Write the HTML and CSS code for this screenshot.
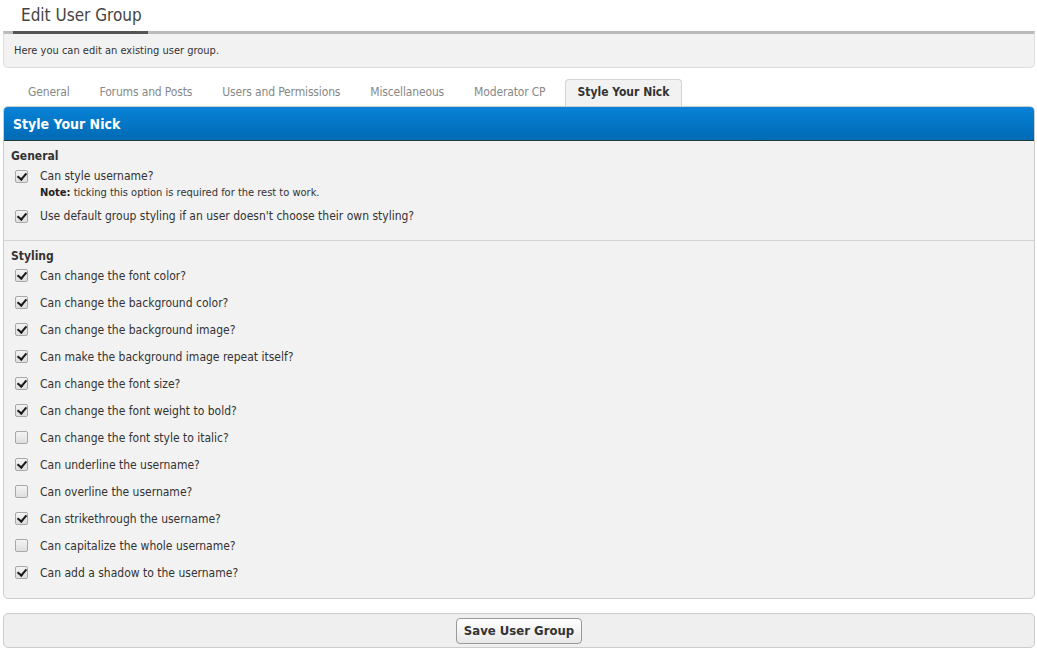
FILE: index.html
```html
<!DOCTYPE html>
<html>
<head>
<meta charset="utf-8">
<title>Edit User Group</title>
<link rel="stylesheet" href="styles.css">
</head>
<body>
<div class="page">
  <div class="title-row"><h1 class="title">Edit User Group</h1></div>
  <div class="desc">Here you can edit an existing user group.</div>

  <ul class="tabs">
    <li class="tab">General</li>
    <li class="tab">Forums and Posts</li>
    <li class="tab">Users and Permissions</li>
    <li class="tab">Miscellaneous</li>
    <li class="tab">Moderator CP</li>
    <li class="tab active">Style Your Nick</li>
  </ul>

  <div class="panel">
    <div class="panel-head">Style Your Nick</div>
    <div class="section general">
      <div class="sec-title">General</div>
      <div class="row"><span class="cb on"></span><span class="lbl">Can style username?</span></div>
      <div class="note"><b>Note:</b> ticking this option is required for the rest to work.</div>
      <div class="row row-gap"><span class="cb on"></span><span class="lbl">Use default group styling if an user doesn't choose their own styling?</span></div>
    </div>
    <div class="section styling">
      <div class="sec-title">Styling</div>
      <div class="row"><span class="cb on"></span><span class="lbl">Can change the font color?</span></div>
      <div class="row"><span class="cb on"></span><span class="lbl">Can change the background color?</span></div>
      <div class="row"><span class="cb on"></span><span class="lbl">Can change the background image?</span></div>
      <div class="row"><span class="cb on"></span><span class="lbl">Can make the background image repeat itself?</span></div>
      <div class="row"><span class="cb on"></span><span class="lbl">Can change the font size?</span></div>
      <div class="row"><span class="cb on"></span><span class="lbl">Can change the font weight to bold?</span></div>
      <div class="row"><span class="cb"></span><span class="lbl">Can change the font style to italic?</span></div>
      <div class="row"><span class="cb on"></span><span class="lbl">Can underline the username?</span></div>
      <div class="row"><span class="cb"></span><span class="lbl">Can overline the username?</span></div>
      <div class="row"><span class="cb on"></span><span class="lbl">Can strikethrough the username?</span></div>
      <div class="row"><span class="cb"></span><span class="lbl">Can capitalize the whole username?</span></div>
      <div class="row"><span class="cb on"></span><span class="lbl">Can add a shadow to the username?</span></div>
    </div>
  </div>

  <div class="footer"><button class="btn" type="button">Save User Group</button></div>
</div>
</body>
</html>
```

FILE: styles.css
```css
* { box-sizing: border-box; }
html, body { margin: 0; padding: 0; background: #fff; }
body {
  font-family: "DejaVu Sans Condensed", "DejaVu Sans", sans-serif;
  font-size: 12px;
  color: #333;
}
.page { padding: 0 2px 0 3px; }

.title-row { display: flex; padding-left: 10px; }
.title {
  margin: 0;
  font-size: 17px;
  font-weight: normal;
  color: #444;
  padding: 5px 7px 0 8px;
  height: 31px;
  line-height: 21px;
}

.desc {
  position: relative;
  height: 37px;
  background: #f2f2f2;
  border: 1px solid #ddd;
  border-top: 3px solid #bbb;
  border-radius: 0 0 5px 5px;
  padding: 10px 10px 0 10px;
  font-size: 11px;
  color: #333;
}
.desc::before {
  content: "";
  position: absolute;
  left: 9px;
  top: -3px;
  width: 135px;
  height: 3px;
  background: #555;
}

.tabs {
  list-style: none;
  margin: 11px 0 0 0;
  padding: 0 0 0 10px;
  display: flex;
  height: 27px;
}
.tab {
  padding: 6px 15px 0 15px;
  color: #888;
  font-size: 12px;
  height: 27px;
  letter-spacing: -0.15px;
}
.tab.active {
  background: #f2f2f2;
  border: 1px solid #d4d4d4;
  border-bottom: none;
  border-radius: 4px 4px 0 0;
  color: #333;
  font-weight: bold;
  padding: 5px 12px 0 11px;
  margin-left: 5px;
  letter-spacing: 0;
}

.panel {
  border: 1px solid #ccc;
  border-radius: 5px;
  background: #f2f2f2;
  overflow: hidden;
  height: 493px;
}
.panel-head {
  height: 34px;
  background: linear-gradient(#0882d8, #006ab4);
  border-bottom: 1px solid #1f3a3a;
  color: #fff;
  font-weight: bold;
  font-size: 14px;
  padding: 9px 9px 0 9px;
}

.section { padding: 7px 7px 0 7px; }
.section.general {
  padding-bottom: 14px;
  border-bottom: 1px solid #d4d4d4;
}
.section.styling { padding-top: 7px; }
.sec-title {
  font-weight: bold;
  font-size: 12px;
  color: #333;
  height: 16px;
  line-height: 16px;
}
.row {
  display: flex;
  align-items: center;
  height: 27px;
}
.styling .sec-title { margin-bottom: -2px; }
.general .sec-title { margin-bottom: 2px; }
.general .row { height: 20px; }
.general .row-gap { margin-top: 6px; }
.cb {
  width: 13px;
  height: 13px;
  border: 1px solid #a8a8a8;
  border-radius: 2px;
  background: linear-gradient(#f4f4f4, #dedede);
  margin: 0 12px 0 4px;
  position: relative;
  flex: none;
}
.cb.on::after {
  content: "";
  position: absolute;
  left: 3px;
  top: 0px;
  width: 4px;
  height: 7px;
  border: solid #1a1a1a;
  border-width: 0 2.5px 2.5px 0;
  transform: rotate(40deg);
}
.lbl { color: #333; }
.note {
  font-size: 11px;
  height: 14px;
  line-height: 14px;
  padding-left: 29px;
  color: #333;
}
.note b { color: #222; }

.footer {
  margin-top: 14px;
  height: 35px;
  border: 1px solid #ccc;
  border-radius: 5px;
  background: #efefef;
  display: flex;
  justify-content: center;
  align-items: center;
}
.btn {
  font-family: inherit;
  font-weight: bold;
  font-size: 13px;
  color: #333;
  height: 26px;
  padding: 0 7px;
  border: 1px solid #999;
  border-radius: 4px;
  background: linear-gradient(#fff, #e8e8e8);
}
```
